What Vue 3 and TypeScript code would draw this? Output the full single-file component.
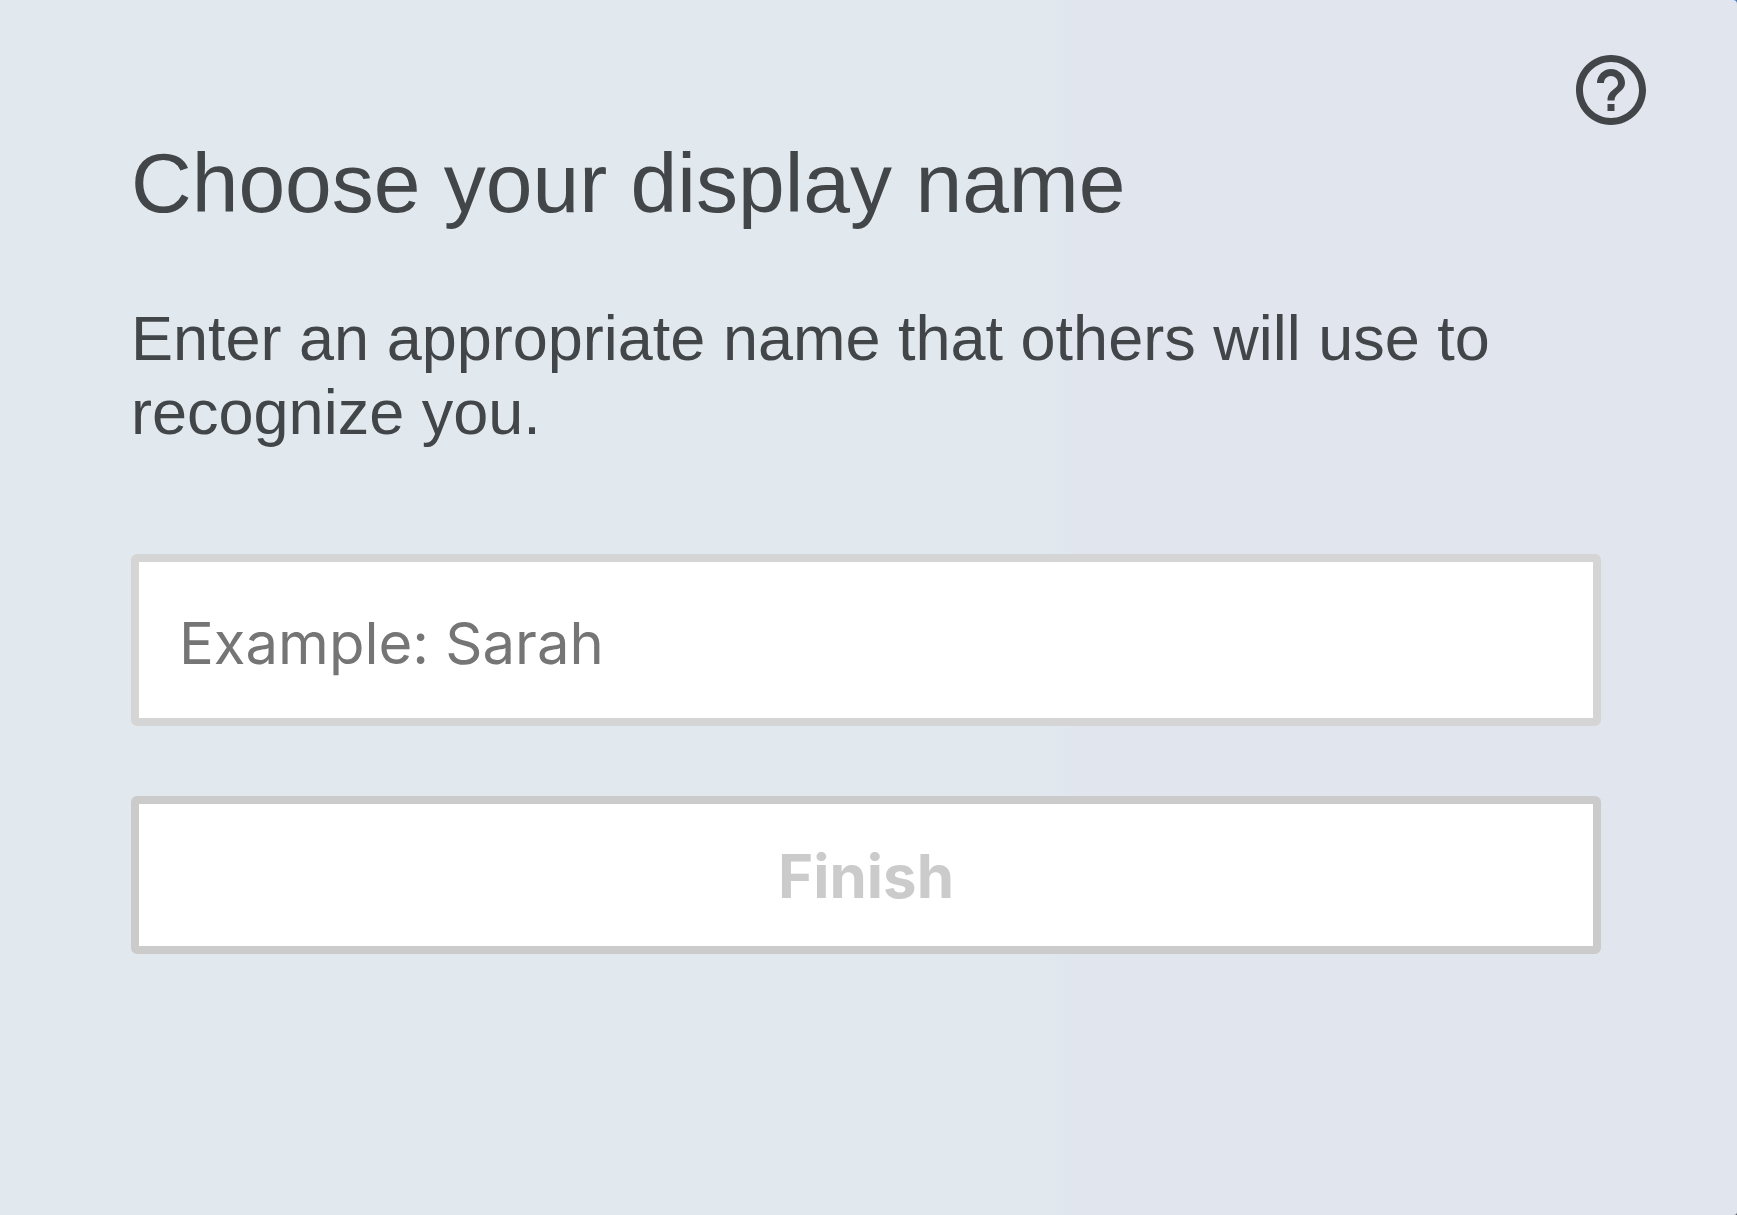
<script setup lang="ts">
import { computed, ref } from 'vue'

const displayName = ref('')
const canFinish = computed(() => displayName.value.trim().length > 0)
</script>

<template>
  <main class="panel">
    <header class="toolbar">
      <button class="help" type="button" aria-label="Help">
        <svg viewBox="0 0 24 24" aria-hidden="true">
          <path
            d="M11 18h2v-2h-2v2zm1-16C6.48 2 2 6.48 2 12s4.480 10 10 10 10-4.480 10-10S17.520 2 12 2zm0 18c-4.410 0-8-3.590-8-8s3.590-8 8-8 8 3.590 8 8-3.590 8-8 8zm0-14c-2.210 0-4 1.790-4 4h2c0-1.100.9-2 2-2s2 .9 2 2c0 2-3 1.750-3 5h2c0-2.250 3-2.500 3-5 0-2.210-1.790-4-4-4z"
          />
        </svg>
      </button>
    </header>
    <form class="form" @submit.prevent>
      <h1 class="title">Choose your display name</h1>
      <label class="hint" for="display-name">
        Enter an appropriate name that others will use to recognize you.
      </label>
      <input
        id="display-name"
        v-model="displayName"
        class="field"
        type="text"
        placeholder="Example: Sarah"
        autocomplete="off"
      />
      <button class="finish" type="submit" :disabled="!canFinish">Finish</button>
    </form>
  </main>
</template>

<style>
body {
  margin: 0;
  background: linear-gradient(#3f78b8, #54585c);
}
</style>

<style scoped>
.panel {
  box-sizing: border-box;
  min-height: 100vh;
  padding: 48px 84px 84px 131px;
  border-radius: 0 4px 3px 0;
  background: linear-gradient(to right, #e1e8ee 60%, #e1e6ee 62%);
  color: #424649;
  font-family: "Liberation Sans", Arial, sans-serif;
}

.toolbar {
  display: flex;
  justify-content: flex-end;
}

.help {
  width: 84px;
  height: 84px;
  padding: 0;
  border: 0;
  background: none;
  color: inherit;
}

.help svg {
  display: block;
  width: 100%;
  fill: currentColor;
}

.form {
  display: flex;
  flex-direction: column;
  margin-right: 52px;
  padding-top: 9px;
}

.title {
  margin: 0 0 76px;
  font-size: 84px;
  line-height: 84px;
  font-weight: 400;
}

.hint {
  margin-bottom: 105px;
  font-size: 63px;
  line-height: 74px;
}

.field,
.finish {
  box-sizing: border-box;
  width: 100%;
  border: 8px solid #d5d5d5;
  border-radius: 6px;
  background: #fff;
  font-family: Inter, sans-serif;
  font-size: 60px;
}

.field {
  height: 172px;
  margin-bottom: 70px;
  padding: 6px 40px 0;
  color: #424649;
  font-size: 58px;
}

.field::placeholder {
  color: #757575;
  opacity: 1;
}

.finish {
  height: 158px;
  padding: 2px 0 0;
  border-color: #cbcbcb;
  color: #424649;
  font-weight: 700;
}

.finish:disabled {
  color: #cbcbcb;
}
</style>
